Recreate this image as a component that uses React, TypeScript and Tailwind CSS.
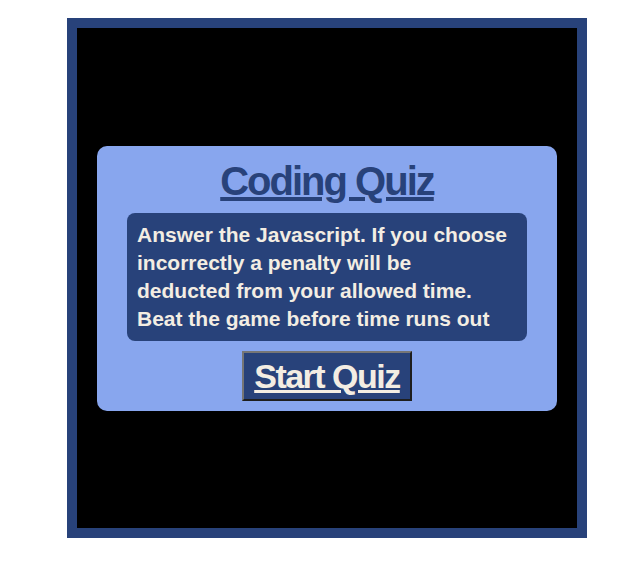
import React from "react";

// Coding quiz start screen
function App() {
  return (
    <div className="min-h-[581px] bg-white pt-[18px] pl-[67px]" style={{ fontFamily: "'Liberation Sans', Arial, sans-serif" }}>
      <div className="flex h-[520px] w-[520px] items-center justify-center border-[10px] border-[#28427a] bg-black">
        <div className="flex w-[460px] flex-col items-center rounded-[10px] bg-[#88a6ee] pt-[15px] pb-[10px]">
          <h1 className="text-[40px] font-bold leading-[40px] tracking-[-2px] text-[#28427a] underline">
            Coding Quiz
          </h1>
          <p className="mt-[12px] w-[400px] rounded-lg bg-[#28427a] px-[10px] py-[8px] text-[21px] font-bold leading-[28px] text-[#f3ede3]">
            Answer the Javascript. If you choose
            <br />
            incorrectly a penalty will be
            <br />
            deducted from your allowed time.
            <br />
            Beat the game before time runs out
          </p>
          <button className="mt-[10px] flex h-[50px] w-[170px] items-center justify-center border-2 border-t-[#767676] border-l-[#767676] border-r-[#1e1e1e] border-b-[#1e1e1e] bg-[#28427a] text-[34px] font-bold leading-[34px] tracking-[-1.5px] text-[#f3ede3] underline">
            Start Quiz
          </button>
        </div>
      </div>
    </div>
  );
}

export default App;
